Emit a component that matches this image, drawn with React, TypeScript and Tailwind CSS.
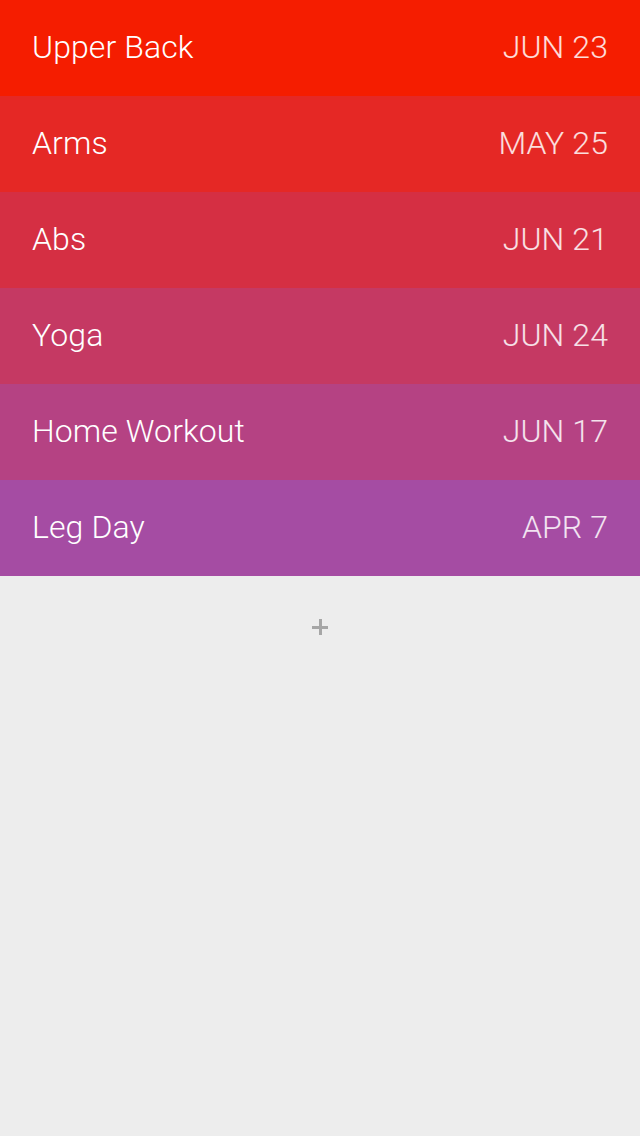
import React from "react";

const rows = [
  { name: "Upper Back", date: "JUN 23", bg: "bg-[#f51d00]" },
  { name: "Arms", date: "MAY 25", bg: "bg-[#e52825]" },
  { name: "Abs", date: "JUN 21", bg: "bg-[#d52f43]" },
  { name: "Yoga", date: "JUN 24", bg: "bg-[#c53963]" },
  { name: "Home Workout", date: "JUN 17", bg: "bg-[#b54283]" },
  { name: "Leg Day", date: "APR 7", bg: "bg-[#a54ca3]" },
];

export default function App() {
  return (
    <div
      className="w-[640px] h-[1136px] bg-[#ededed] flex flex-col"
      style={{ fontFamily: "Roboto, 'Helvetica Neue', sans-serif" }}
    >
      {rows.map((r) => (
        <div
          key={r.name}
          className={`${r.bg} h-[96px] flex items-center justify-between px-[32px] pb-[2px]`}
        >
          <span className="text-white text-[32px] font-light tracking-[0.1px]">{r.name}</span>
          <span className="text-white/85 text-[32px] font-light tracking-[0.1px]">{r.date}</span>
        </div>
      ))}
      <div className="flex justify-center pt-[43px]">
        <div className="relative w-[16px] h-[16px]">
          <div className="absolute left-0 top-[7px] w-[16px] h-[3px] bg-[#a6a6a6]" />
          <div className="absolute left-[7px] top-0 w-[3px] h-[16px] bg-[#a6a6a6]" />
        </div>
      </div>
    </div>
  );
}
